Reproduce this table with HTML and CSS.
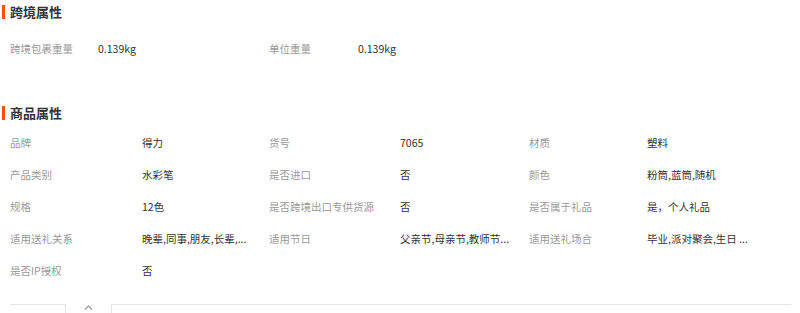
FILE: index.html
```html
<!DOCTYPE html>
<html lang="zh">
<head>
<meta charset="utf-8">
<link rel="stylesheet" href="styles.css">
</head>
<body>
<div class="page">
  <section class="sec sec-cross">
    <h2 class="sec-title">跨境属性</h2>
    <div class="grid grid-cross">
      <span class="lbl">跨境包裹重量</span><span class="val">0.139kg</span>
      <span class="lbl">单位重量</span><span class="val">0.139kg</span>
    </div>
  </section>
  <section class="sec sec-goods">
    <h2 class="sec-title">商品属性</h2>
    <div class="grid grid-goods">
      <span class="lbl">品牌</span><span class="val">得力</span>
      <span class="lbl">货号</span><span class="val">7065</span>
      <span class="lbl">材质</span><span class="val">塑料</span>

      <span class="lbl">产品类别</span><span class="val">水彩笔</span>
      <span class="lbl">是否进口</span><span class="val">否</span>
      <span class="lbl">颜色</span><span class="val">粉筒,蓝筒,随机</span>

      <span class="lbl">规格</span><span class="val">12色</span>
      <span class="lbl">是否跨境出口专供货源</span><span class="val">否</span>
      <span class="lbl">是否属于礼品</span><span class="val">是，个人礼品</span>

      <span class="lbl">适用送礼关系</span><span class="val">晚辈,同事,朋友,长辈,...</span>
      <span class="lbl">适用节日</span><span class="val">父亲节,母亲节,教师节...</span>
      <span class="lbl">适用送礼场合</span><span class="val">毕业,派对聚会,生日 ...</span>

      <span class="lbl">是否IP授权</span><span class="val">否</span>
    </div>
  </section>
  <div class="bottom">
    <div class="box-left"></div>
    <div class="caret"><svg width="9" height="5" viewBox="0 0 9 5"><path d="M1 4.5 L4.5 1 L8 4.5" fill="none" stroke="#999" stroke-width="1.2"/></svg></div>
    <div class="box-right"></div>
  </div>
</div>
</body>
</html>
```

FILE: styles.css
```css
* { box-sizing: border-box; margin: 0; padding: 0; }
html, body { background: #fff; }
body {
  font-family: "Microsoft YaHei", "Noto Sans CJK SC", "Noto Sans", sans-serif;
  font-size: 10.5px;
  color: #333;
  width: 800px;
  height: 313px;
  overflow: hidden;
}
.page { padding-left: 10px; }
.sec-title {
  position: relative;
  height: 24px;
  line-height: 24px;
  font-size: 13px;
  font-weight: bold;
  color: #333;
}
.sec-title::before {
  content: "";
  position: absolute;
  left: -8px;
  top: 5px;
  width: 3px;
  height: 14px;
  background: #ff5000;
}
.grid { display: grid; grid-auto-rows: 32px; align-items: center; }
.grid span { line-height: 32px; white-space: nowrap; overflow: hidden; }
.grid-cross { grid-template-columns: 88px 171px 89px auto; margin-top: 9px; }
.sec-goods { margin-top: 36px; }
.grid-goods { grid-template-columns: 132px 127px 131px 129px 118px auto; margin-top: 2px; }
.lbl { color: #999; }
.val { color: #333; }
.bottom {
  display: flex;
  align-items: flex-start;
  margin-top: 17px;
  height: 20px;
}
.box-left {
  width: 56px;
  height: 20px;
  border-top: 1px solid #e5e5e5;
  border-right: 1px solid #e5e5e5;
}
.caret {
  width: 45px;
  display: flex;
  justify-content: center;
  padding-top: 1px;
}
.caret svg { display: block; }
.box-right {
  width: 680px;
  height: 20px;
  border-top: 1px solid #e5e5e5;
  border-left: 1px solid #e5e5e5;
}
```
